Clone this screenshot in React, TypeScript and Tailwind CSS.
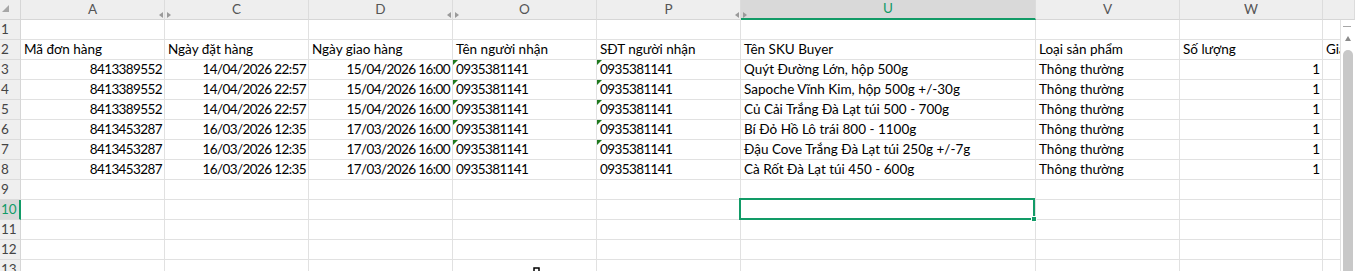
import React from "react";

type Col = { letter: string; w: string; hiddenAfter?: boolean };

const COLS: Col[] = [
  { letter: "A", w: "w-[144px]", hiddenAfter: true },
  { letter: "C", w: "w-[144px]" },
  { letter: "D", w: "w-[144px]", hiddenAfter: true },
  { letter: "O", w: "w-[144px]" },
  { letter: "P", w: "w-[144px]", hiddenAfter: true },
  { letter: "U", w: "w-[295px]" },
  { letter: "V", w: "w-[144px]" },
  { letter: "W", w: "w-[143px]" },
  { letter: "", w: "flex-1 min-w-0" },
];

type Cell = { v: string; right?: boolean; flag?: boolean; num?: boolean };

const HEADERS = [
  "Mã đơn hàng",
  "Ngày đặt hàng",
  "Ngày giao hàng",
  "Tên người nhận",
  "SĐT người nhận",
  "Tên SKU Buyer",
  "Loại sản phẩm",
  "Số lượng",
  "Giá",
];

const ORDERS = [
  ["8413389552", "14/04/2026 22:57", "15/04/2026 16:00", "Quýt Đường Lớn, hộp 500g"],
  ["8413389552", "14/04/2026 22:57", "15/04/2026 16:00", "Sapoche Vĩnh Kim, hộp 500g +/-30g"],
  ["8413389552", "14/04/2026 22:57", "15/04/2026 16:00", "Củ Cải Trắng Đà Lạt túi 500 - 700g"],
  ["8413453287", "16/03/2026 12:35", "17/03/2026 16:00", "Bí Đỏ Hồ Lô trái 800 - 1100g"],
  ["8413453287", "16/03/2026 12:35", "17/03/2026 16:00", "Đậu Cove Trắng Đà Lạt túi 250g +/-7g"],
  ["8413453287", "16/03/2026 12:35", "17/03/2026 16:00", "Cà Rốt Đà Lạt túi 450 - 600g"],
];

function rowCells(row: number): Cell[] {
  if (row === 2) return HEADERS.map((v) => ({ v }));
  const o = ORDERS[row - 3];
  if (!o) return COLS.map(() => ({ v: "" }));
  const flag = row < 8;
  return [
    { v: o[0], right: true, num: true },
    { v: o[1], right: true, num: true },
    { v: o[2], right: true, num: true },
    { v: "0935381141", flag, num: true },
    { v: "0935381141", flag, num: true },
    { v: o[3] },
    { v: "Thông thường" },
    { v: "1", right: true },
    { v: "" },
  ];
}

function HiddenColArrows() {
  return (
    <svg className="absolute -right-[7px] top-[12px] z-10" width="12" height="6" viewBox="0 0 12 6">
      <polygon points="0,3 4,0 4,6" fill="#9a9a9a" />
      <polygon points="12,3 8,0 8,6" fill="#9a9a9a" />
    </svg>
  );
}

function ColumnHeader() {
  return (
    <div className="flex h-5 bg-[#eeeeee] text-[#555555]">
      <div className="relative w-[21px] shrink-0 border-r border-b border-[#d6d6d6]">
        <svg className="absolute left-[2px] top-[5px]" width="8" height="8" viewBox="0 0 8 8">
          <polygon points="7,0 7,7 0,7" fill="#a6a6a6" />
        </svg>
      </div>
      {COLS.map((c, i) => {
        const sel = c.letter === "U";
        return (
          <div
            key={i}
            className={`relative shrink-0 ${c.w} flex items-center justify-center border-r border-[#dcdcdc] leading-[19px] ${
              sel ? "bg-[#d9d9d9] border-b-2 border-b-[#129b67] text-[#129b67]" : "border-b border-b-[#d6d6d6]"
            }`}
          >
            <span className="-mt-[1px]">{c.letter}</span>
            {c.hiddenAfter && <HiddenColArrows />}
          </div>
        );
      })}
    </div>
  );
}

function Row({ n }: { n: number }) {
  const cells = rowCells(n);
  const selRow = n === 10;
  return (
    <div className="flex h-5">
      <div
        className={`w-[21px] shrink-0 border-b border-[#dcdcdc] pl-[1px] leading-[19px] ${
          selRow ? "bg-[#d9d9d9] border-r-2 border-r-[#129b67] text-[#129b67]" : "bg-[#efefef] border-r border-r-[#d6d6d6] text-[#444444]"
        }`}
      >
        {n}
      </div>
      {COLS.map((c, i) => {
        const cell = cells[i];
        const isSel = selRow && c.letter === "U";
        return (
          <div
            key={i}
            className={`relative shrink-0 ${c.w} border-r border-b border-[#e1e1e1] px-[2px] leading-[19px] whitespace-nowrap ${
              cell.right ? "text-right" : "text-left pl-[3px]"
            } ${cell.num ? "tracking-[-0.6px]" : ""} ${c.letter === "" ? "overflow-hidden" : ""}`}
          >
            {cell.flag && (
              <svg className="absolute left-0 top-0" width="5" height="5" viewBox="0 0 5 5">
                <polygon points="0,0 5,0 0,5" fill="#1f7a1f" />
              </svg>
            )}
            {cell.v}
            {isSel && (
              <div className="absolute left-[-2px] top-[-2px] right-[0px] bottom-[-1px] z-10 border-2 border-[#129b67]">
                <div className="absolute right-[-4px] bottom-[-4px] w-[6px] h-[6px] bg-[#129b67] border border-white" />
              </div>
            )}
          </div>
        );
      })}
    </div>
  );
}

function Scrollbar() {
  return (
    <div className="relative w-[14px] shrink-0 bg-white">
      <div className="absolute left-[2px] top-[6px] h-[1px] w-[8px] bg-[#a6a6a6]" />
      <svg className="absolute left-[4px] top-[16px]" width="6" height="5" viewBox="0 0 6 5">
        <polygon points="3,0 6,5 0,5" fill="#8a8a8a" />
      </svg>
      <div className="absolute left-[2px] top-[30px] bottom-[-10px] w-[10px] rounded-full bg-[#c8c8c8]" />
    </div>
  );
}

export default function App() {
  const rows = Array.from({ length: 13 }, (_, i) => i + 1);
  return (
    <div className="relative h-[271px] w-[1355px] overflow-hidden bg-white font-['Lato',sans-serif] text-[13.5px] text-black">
      <ColumnHeader />
      <div className="flex">
        <div className="flex-1 min-w-0 flex flex-col">
          {rows.map((n) => (
            <Row key={n} n={n} />
          ))}
        </div>
        <Scrollbar />
      </div>
      {/* mouse pointer peeking at the bottom */}
      <svg className="absolute left-[533px] top-[267px]" width="8" height="5" viewBox="0 0 8 5">
        <path d="M1 5V1h5v4" fill="none" stroke="#000" strokeWidth="1.5" />
      </svg>
    </div>
  );
}
